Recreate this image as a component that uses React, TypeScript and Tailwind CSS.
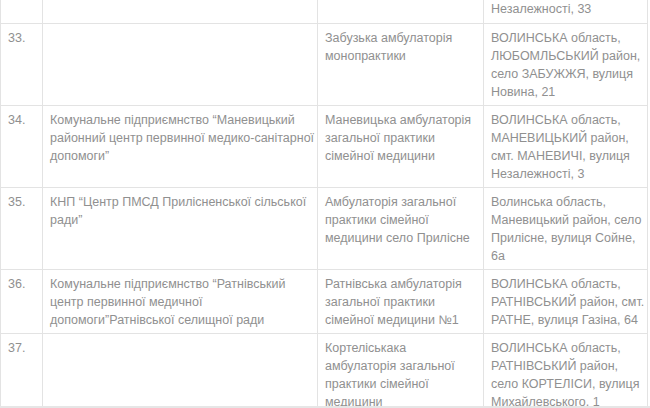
type Row = {
  num: string;
  owner: string[];
  name: string[];
  address: string[];
};

const rows: Row[] = [
  {
    num: "33.",
    owner: [],
    name: ["Забузька амбулаторія", "монопрактики"],
    address: ["ВОЛИНСЬКА область,", "ЛЮБОМЛЬСЬКИЙ район,", "село ЗАБУЖЖЯ, вулиця", "Новина, 21"],
  },
  {
    num: "34.",
    owner: [
      "Комунальне підприємнство “Маневицький",
      "районний центр первинної медико-санітарної",
      "допомоги”",
    ],
    name: ["Маневицька амбулаторія", "загальної практики", "сімейної медицини"],
    address: ["ВОЛИНСЬКА область,", "МАНЕВИЦЬКИЙ район,", "смт. МАНЕВИЧІ, вулиця", "Незалежності, 3"],
  },
  {
    num: "35.",
    owner: ["КНП “Центр ПМСД Прилісненської сільської", "ради”"],
    name: ["Амбулаторія загальної", "практики сімейної", "медицини село Прилісне"],
    address: ["Волинська область,", "Маневицький район, село", "Прилісне, вулиця Сойне,", "6а"],
  },
  {
    num: "36.",
    owner: [
      "Комунальне підприємнство “Ратнівський",
      "центр первинної медичної",
      "допомоги”Ратнівської селищної ради",
    ],
    name: ["Ратнівська амбулаторія", "загальної практики", "сімейної медицини №1"],
    address: ["ВОЛИНСЬКА область,", "РАТНІВСЬКИЙ район, смт.", "РАТНЕ, вулиця Газіна, 64"],
  },
  {
    num: "37.",
    owner: [],
    name: ["Кортеліськака", "амбулаторія загальної", "практики сімейної", "медицини"],
    address: ["ВОЛИНСЬКА область,", "РАТНІВСЬКИЙ район,", "село КОРТЕЛІСИ, вулиця", "Михайлевського, 1"],
  },
];

const cell = "border border-[#e3e3e3] pl-[7px] pr-[2px] pt-[5px] pb-[4px] align-top";
const topCell = "border border-t-0 border-[#e3e3e3] pl-[7px] pr-[2px] pb-[5px]";

function Lines({ lines }: { lines: string[] }) {
  return (
    <>
      {lines.map((l, i) => (
        <div key={i} className="whitespace-nowrap">
          {l}
        </div>
      ))}
    </>
  );
}

export default function App() {
  return (
    <div
      className="flex h-[408px] w-[650px] flex-col overflow-hidden bg-white text-[12.5px] leading-[18px] text-[#909090]"
      style={{ fontFamily: '"Liberation Sans", Arial, sans-serif' }}
    >
      <div className="flex-1 overflow-hidden">
        <table className="w-[648px] table-fixed border-collapse">
          <colgroup>
            <col className="w-[42px]" />
            <col className="w-[275px]" />
            <col className="w-[166px]" />
            <col />
          </colgroup>
          <tbody>
            <tr>
              <td className={topCell} />
              <td className={topCell} />
              <td className={topCell} />
              <td className={topCell}>Незалежності, 33</td>
            </tr>
            {rows.map((r) => (
              <tr key={r.num}>
                <td className={cell}>{r.num}</td>
                <td className={cell}>
                  <Lines lines={r.owner} />
                </td>
                <td className={cell}>
                  <Lines lines={r.name} />
                </td>
                <td className={cell}>
                  <Lines lines={r.address} />
                </td>
              </tr>
            ))}
          </tbody>
        </table>
      </div>
      <div className="h-[2px] bg-[#e6e6e6]" />
    </div>
  );
}
